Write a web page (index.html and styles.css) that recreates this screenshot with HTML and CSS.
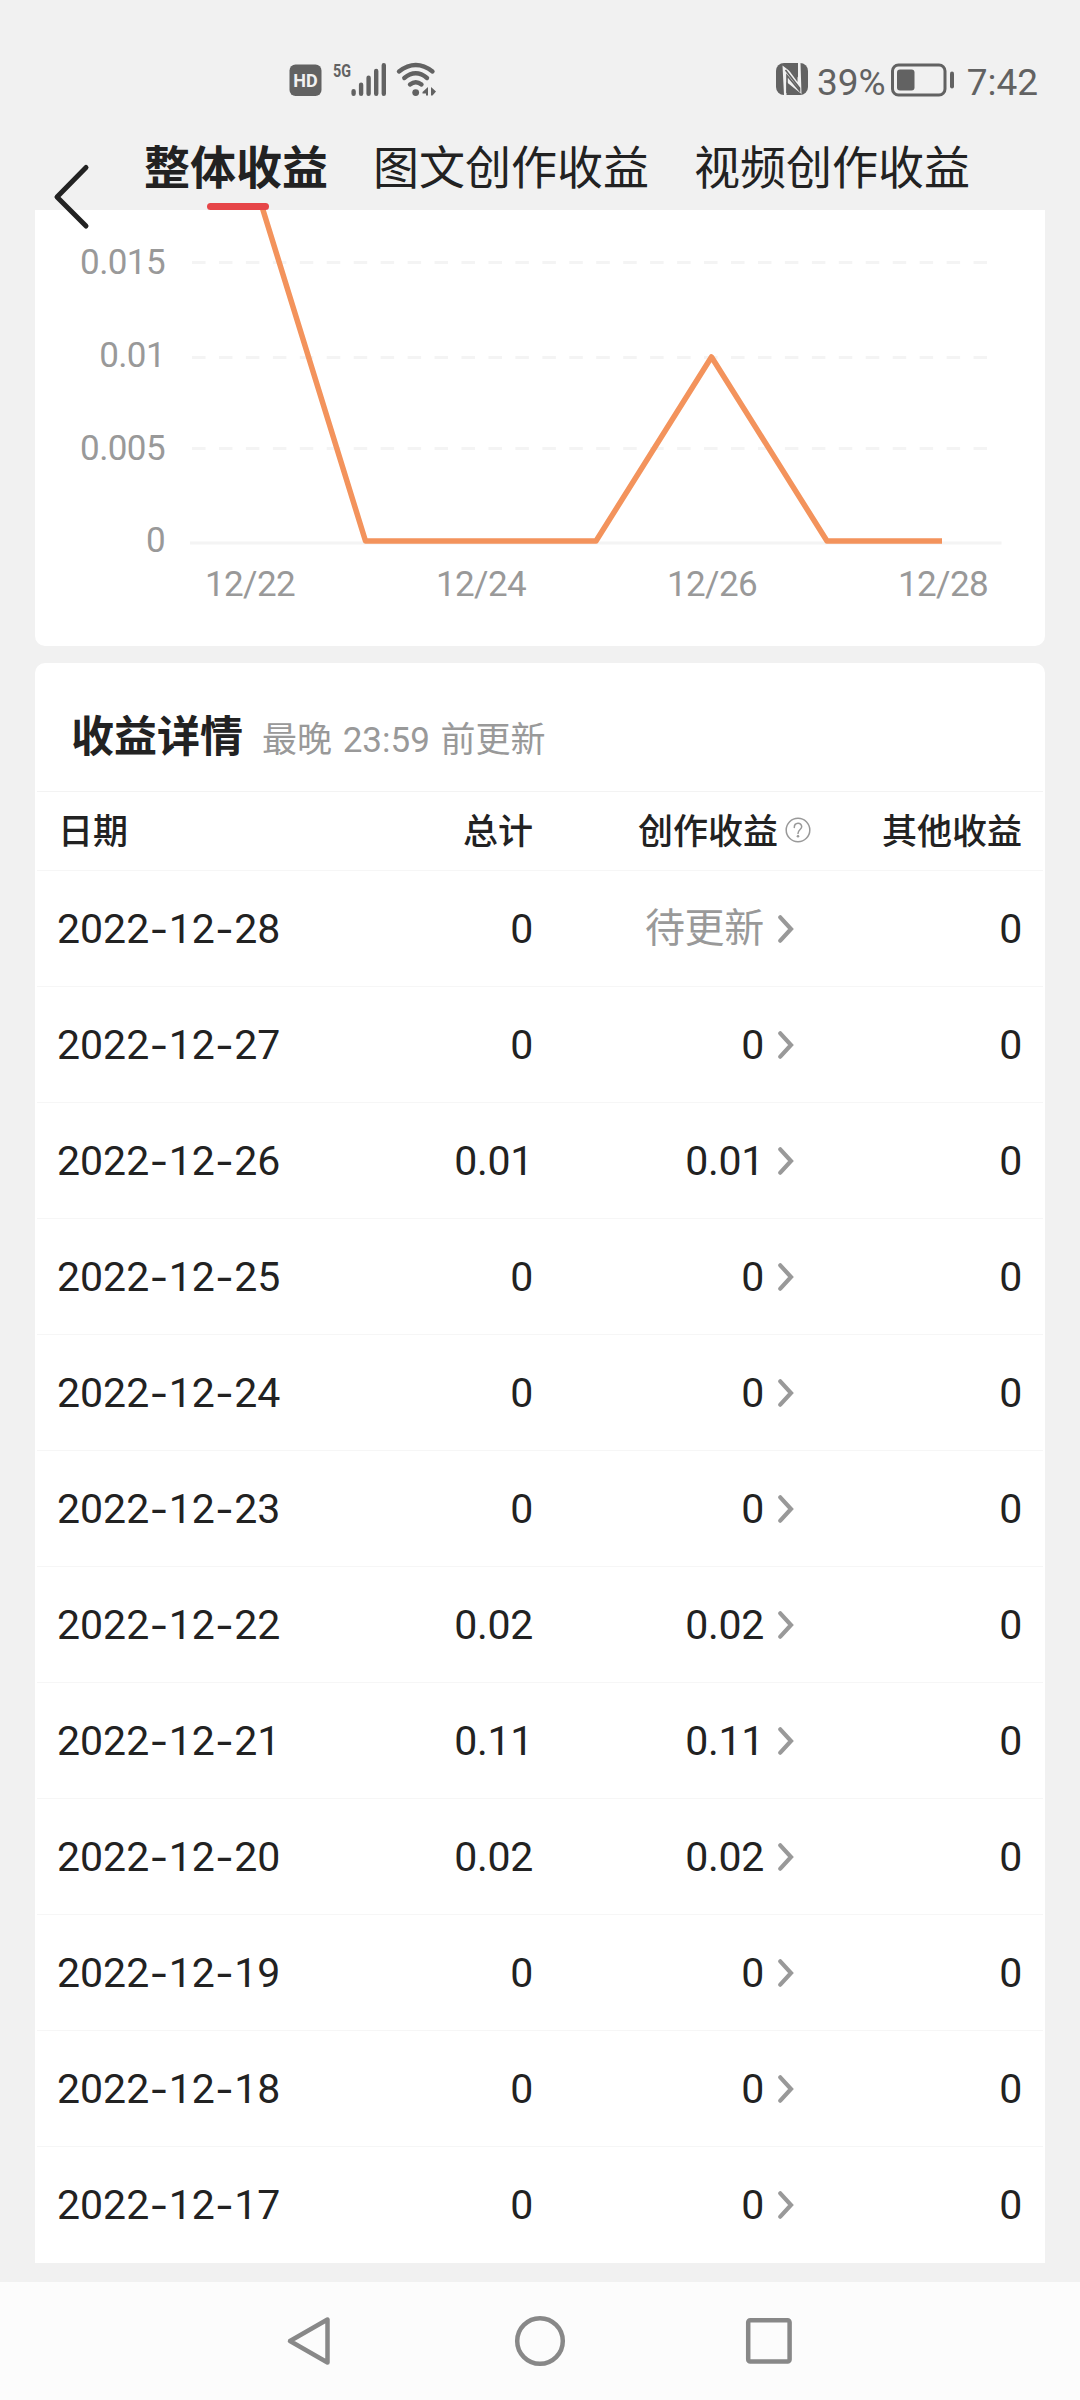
FILE: index.html
```html
<!DOCTYPE html>
<html lang="zh-CN">

<head>
    <meta charset="UTF-8">
    <meta name="viewport" content="width=device-width, initial-scale=1.0">
    <title>整体收益</title>
    <link rel="stylesheet" href="styles.css">
</head>

<body>
    <!-- icon shared by all table rows -->
    <svg width="0" height="0" class="defs">
        <symbol id="arrow" viewBox="0 0 16 28">
            <path d="M2.3 2.3L13 14L2.3 25.7" fill="none" stroke="#999" stroke-width="4.2" stroke-linecap="round" />
        </symbol>
    </svg>

    <div class="status-bar">
        <div class="status-left">
            <svg width="148" height="48" viewBox="288 52 148 48" fill="#626262">
                <rect x="289.5" y="64.5" width="32" height="31.5" rx="6" />
                <text x="305.5" y="87" class="hd-text" text-anchor="middle">HD</text>
                <text x="333" y="77" class="net-text" textLength="18" lengthAdjust="spacingAndGlyphs">5G</text>
                <g fill="none" stroke="#626262" stroke-width="4.4" stroke-linecap="round">
                    <path d="M353.6 91.2V93.8M361.1 84.7V93.8M368.6 77.7V93.8M376.2 70.9V93.8M383.8 65.2V93.8" />
                    <path d="M399 71.5Q415.8 58.5 432.5 71.5M404.3 78Q415.8 68.5 427 78M410 84.5Q415.8 80 421.5 84.5" />
                </g>
                <circle cx="415.7" cy="92.6" r="3.4" />
                <path d="M422.5 92L428 87V95.5H426V93.5H422.5zM431 87L436 91.5L432.5 95.5H431z" />
            </svg>
        </div>
        <div class="status-right">
            <svg width="32" height="32" viewBox="0 0 32 32">
                <rect width="32" height="32" rx="8" fill="#626262" />
                <path d="M6.5 2.5L22 14.5V0H24.5L25.5 31L10.5 19V32H8z" fill="#f1f1f1" />
                <path d="M9.500 7L23.500 25V27.500L11 12.500V30" fill="none" stroke="#626262" stroke-width="1.600" />
                <path d="M12 6L21.500 13.500V19z" fill="#626262" />
            </svg>
            <span class="battery-text">39%</span>
            <svg width="64" height="34" viewBox="891 63.500 64 34">
                <rect x="893.500" y="65.500" width="52.500" height="30" rx="6" fill="none" stroke="#626262"
                    stroke-width="3" />
                <rect x="898" y="70" width="17.500" height="21" rx="3" fill="#626262" />
                <rect x="951" y="72" width="4" height="17" rx="2" fill="#626262" />
            </svg>
            <span class="time">7:42</span>
        </div>
    </div>

    <div class="header">
        <svg class="back" width="40" height="70" viewBox="50 162 40 70">
            <path d="M86 167.500L57 197L86 226" fill="none" stroke="#222" stroke-width="5" stroke-linecap="round"
                stroke-linejoin="round" />
        </svg>
        <div class="tab active">整体收益</div>
        <div class="tab">图文创作收益</div>
        <div class="tab">视频创作收益</div>
    </div>

    <div class="card chart-card">
        <svg class="chart" width="1010" height="436" viewBox="35 210 1010 436">
            <g class="grid-lines">
                <path d="M192 262.500H989M192 357.500H989M192 448.500H989" stroke-dasharray="13.500 13.450" />
                <path d="M190 543H1001.500" />
            </g>
            <g class="labels" text-anchor="end">
                <text x="165" y="274">0.015</text>
                <text x="165" y="367">0.01</text>
                <text x="165" y="460">0.005</text>
                <text x="165" y="552">0</text>
            </g>
            <g class="labels" text-anchor="middle">
                <text x="250" y="596">12/22</text>
                <text x="481" y="596">12/24</text>
                <text x="712" y="596">12/26</text>
                <text x="943" y="596">12/28</text>
            </g>
            <path class="line" d="M250 168L365.500 541H596L711.500 357L827 541H942" />
        </svg>
    </div>

    <div class="card detail-card">
        <div class="detail-title">
            <h2>收益详情</h2>
            <span>最晚 23:59 前更新</span>
        </div>
        <div class="row row-head">
            <div>日期</div>
            <div>总计</div>
            <div>创作收益
                <svg width="26" height="26" viewBox="0 0 26 26">
                    <circle cx="13" cy="13" r="11.800" fill="none" stroke="#999" stroke-width="1.500" />
                    <path d="M9.300 10.500C9.300 5 16.700 5 16.700 9.800C16.700 12.500 13 12.700 13 16.500" fill="none"
                        stroke="#999" stroke-width="1.500" stroke-linecap="round" />
                    <circle cx="13" cy="19.300" r="1.300" fill="#999" />
                </svg>
            </div>
            <div>其他收益</div>
        </div>
        <div class="row">
            <div>2022<i>-</i>12<i>-</i>28</div>
            <div>0</div>
            <div><span class="pending">待更新</span><svg class="arrow"><use href="#arrow" /></svg></div>
            <div>0</div>
        </div>
        <div class="row">
            <div>2022<i>-</i>12<i>-</i>27</div>
            <div>0</div>
            <div>0<svg class="arrow"><use href="#arrow" /></svg></div>
            <div>0</div>
        </div>
        <div class="row">
            <div>2022<i>-</i>12<i>-</i>26</div>
            <div>0.01</div>
            <div>0.01<svg class="arrow"><use href="#arrow" /></svg></div>
            <div>0</div>
        </div>
        <div class="row">
            <div>2022<i>-</i>12<i>-</i>25</div>
            <div>0</div>
            <div>0<svg class="arrow"><use href="#arrow" /></svg></div>
            <div>0</div>
        </div>
        <div class="row">
            <div>2022<i>-</i>12<i>-</i>24</div>
            <div>0</div>
            <div>0<svg class="arrow"><use href="#arrow" /></svg></div>
            <div>0</div>
        </div>
        <div class="row">
            <div>2022<i>-</i>12<i>-</i>23</div>
            <div>0</div>
            <div>0<svg class="arrow"><use href="#arrow" /></svg></div>
            <div>0</div>
        </div>
        <div class="row">
            <div>2022<i>-</i>12<i>-</i>22</div>
            <div>0.02</div>
            <div>0.02<svg class="arrow"><use href="#arrow" /></svg></div>
            <div>0</div>
        </div>
        <div class="row">
            <div>2022<i>-</i>12<i>-</i>21</div>
            <div>0.11</div>
            <div>0.11<svg class="arrow"><use href="#arrow" /></svg></div>
            <div>0</div>
        </div>
        <div class="row">
            <div>2022<i>-</i>12<i>-</i>20</div>
            <div>0.02</div>
            <div>0.02<svg class="arrow"><use href="#arrow" /></svg></div>
            <div>0</div>
        </div>
        <div class="row">
            <div>2022<i>-</i>12<i>-</i>19</div>
            <div>0</div>
            <div>0<svg class="arrow"><use href="#arrow" /></svg></div>
            <div>0</div>
        </div>
        <div class="row">
            <div>2022<i>-</i>12<i>-</i>18</div>
            <div>0</div>
            <div>0<svg class="arrow"><use href="#arrow" /></svg></div>
            <div>0</div>
        </div>
        <div class="row">
            <div>2022<i>-</i>12<i>-</i>17</div>
            <div>0</div>
            <div>0<svg class="arrow"><use href="#arrow" /></svg></div>
            <div>0</div>
        </div>
    </div>

    <div class="nav-bar">
        <svg width="52" height="52" viewBox="0 0 52 52">
            <path d="M6 26L43.500 4.500V47.500z" />
        </svg>
        <svg width="52" height="52" viewBox="0 0 52 52">
            <circle cx="26" cy="26" r="22.800" />
        </svg>
        <svg width="52" height="52" viewBox="0 0 52 52">
            <rect x="4.200" y="5.200" width="41.400" height="41.400" rx="2" />
        </svg>
    </div>
</body>

</html>
```

FILE: styles.css
```css
* {
    box-sizing: border-box;
}

body {
    width: 1080px;
    height: 2400px;
    margin: 0;
    display: flex;
    flex-direction: column;
    overflow: hidden;
    background-color: #f1f1f1;
    color: #222;
    font-family: Roboto, "Noto Sans CJK SC", sans-serif;
}

svg {
    display: block;
    flex-shrink: 0;
}

.defs {
    position: absolute;
}

/* status bar */
.status-bar {
    display: flex;
    justify-content: space-between;
    height: 125px;
    padding: 52px 42px 0 288px;
    color: #626262;
    font-size: 37px;
    line-height: 40px;
}

.status-right {
    display: flex;
    align-items: flex-start;
    padding-top: 11px;
}

.battery-text {
    margin: 0 4px 0 9px;
}

.time {
    margin-left: 13px;
}

.hd-text {
    fill: #f1f1f1;
    font: 700 18px Roboto, sans-serif;
}

.net-text {
    font: 700 19px Roboto, sans-serif;
}

/* tabs */
.header {
    position: relative;
    display: flex;
    gap: 45px;
    height: 85px;
    padding-left: 144px;
}

.back {
    position: absolute;
    left: 50px;
    top: 37px;
}

.tab {
    height: 85px;
    font-size: 46px;
    line-height: 86px;
}

.tab.active {
    position: relative;
    font-weight: 700;
}

.tab.active::after {
    content: "";
    position: absolute;
    bottom: 0;
    left: 63px;
    width: 62px;
    height: 7px;
    border-radius: 4px;
    background-color: #e64548;
}

/* cards */
.card {
    width: 1010px;
    margin: 0 auto;
    background-color: #fff;
}

.chart-card {
    height: 436px;
    border-radius: 0 0 10px 10px;
}

.grid-lines {
    fill: none;
    stroke: #f4f4f4;
    stroke-width: 3;
}

.labels {
    fill: #999;
    font-size: 35px;
    letter-spacing: -0.6px;
}

.line {
    fill: none;
    stroke: #f3935c;
    stroke-width: 5.5;
    stroke-linejoin: round;
}

.detail-card {
    margin-top: 17px;
    border-radius: 10px 10px 0 0;
}

.detail-title {
    display: flex;
    align-items: baseline;
    height: 129px;
    margin: 0 2px;
    padding-left: 34px;
    border-bottom: 1px solid #f3f3f3;
    line-height: 149px;
}

.detail-title h2 {
    margin: 0 19px 0 0;
    font-size: 43px;
}

.detail-title span {
    color: #999;
    font-size: 35px;
    word-spacing: 2px;
}

.row {
    display: grid;
    grid-template-columns: 276px 200px 279px 1fr;
    align-items: center;
    height: 116px;
    margin: 0 2px;
    padding: 0 21px 0 20px;
    border-bottom: 1px solid #f6f6f6;
    font-size: 41px;
    line-height: 60px;
    letter-spacing: -0.3px;
}

.row:last-child {
    border-bottom: none;
}

.row div {
    display: flex;
    align-items: center;
    justify-content: flex-end;
}

.row div:first-child {
    justify-content: flex-start;
    letter-spacing: 0;
}

.row div:nth-child(3) {
    padding-right: 18px;
}

/* wider dash in the dates */
.row i {
    font-family: Inter, sans-serif;
    font-style: normal;
    width: 19.5px;
    text-align: center;
}

.arrow {
    width: 16px;
    height: 28px;
    margin-left: 14px;
}

.pending {
    color: #999;
    font-size: 40px;
    padding-top: 1px;
}

.row-head {
    height: 79px;
    padding-top: 3px;
    font-size: 35px;
    font-weight: 500;
    letter-spacing: 0;
}

.row-head div:first-child {
    padding-left: 1px;
}

.row.row-head div:nth-child(3) {
    padding-right: 1px;
}

.row-head svg {
    margin: 0 0 5px 7px;
}

/* system navigation */
.nav-bar {
    display: flex;
    justify-content: center;
    align-items: center;
    gap: 178px;
    height: 118px;
    margin-top: auto;
    background-color: #fcfcfc;
}

.nav-bar svg {
    fill: none;
    stroke: #888;
    stroke-width: 4.5;
    stroke-linejoin: round;
}
```
